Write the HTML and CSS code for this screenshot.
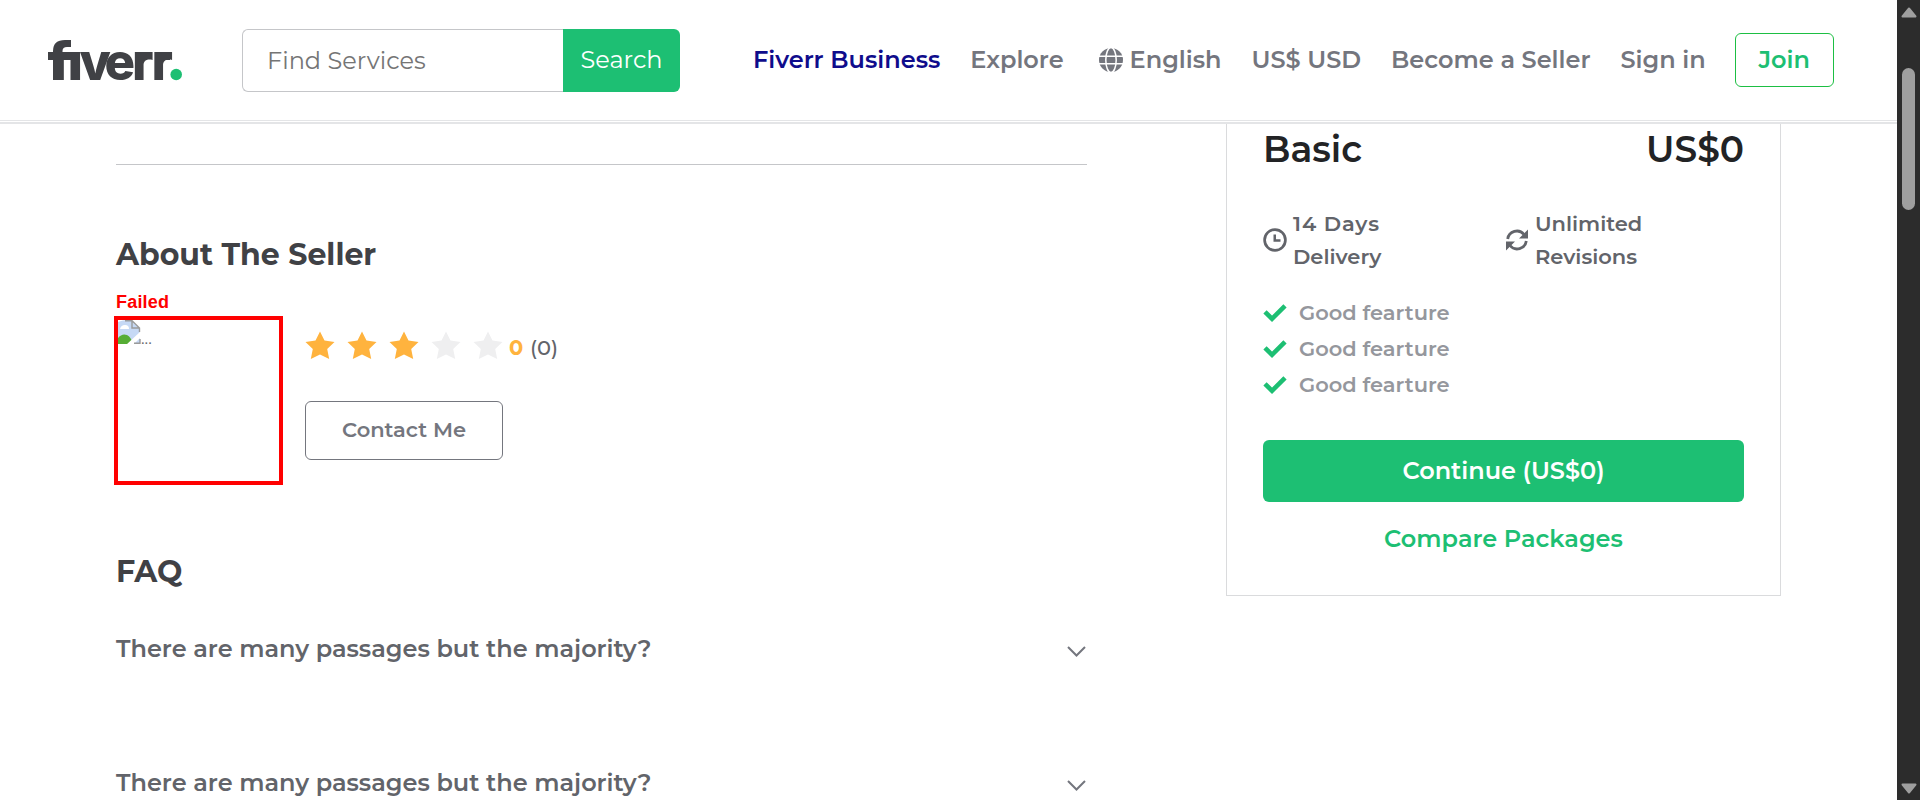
FILE: index.html
```
<!DOCTYPE html>
<html lang="en">
<head>
<meta charset="utf-8">
<title>Fiverr</title>
<link rel="stylesheet" href="styles.css">
</head>
<body>
<div class="page">
  <header class="header">
    <div class="header-inner">
      <svg class="logo" width="136" height="46" viewBox="0 0 136 46" role="img" aria-label="fiverr">
        <text class="wordmark" y="43" x="2 20.500 31.500 56.500 84 103.500">fiverr</text>
        <rect x="14" y="0" width="20" height="15" fill="#fff"/>
        <path d="M5 15V14Q5 3 17 3H23V10H19Q14.500 10 14.500 14V15H32V43H22.500V23H14.500V43H5V23H0V15Z" fill="#404145"/>
        <path d="M94 15H103V22H94ZM112 15H122V23H112Z" fill="#404145"/>
        <circle cx="128.200" cy="37.500" r="5.800" fill="#1dbf73"/>
      </svg>
      <form class="search">
        <span class="search-input">Find Services</span>
        <span class="search-btn">Search</span>
      </form>
      <nav class="nav">
        <a class="business">Fiverr Business</a>
        <a class="explore">Explore</a>
        <a class="lang"><svg width="24" height="24" viewBox="0 0 24 24"><circle cx="12" cy="12" r="12" fill="#74767e"/><g fill="none" stroke="#fff" stroke-width="1.500"><path d="M0 8.200H24M0 15.800H24"/><ellipse cx="12" cy="12" rx="5.200" ry="12.500"/></g></svg><span>English</span></a>
        <a>US$ USD</a>
        <a>Become a Seller</a>
        <a>Sign in</a>
        <a class="join">Join</a>
      </nav>
    </div>
  </header>
  <main class="main">
    <section class="details">
      <div class="rule"></div>
      <h2 class="title about">About The Seller</h2>
      <div class="failed">Failed</div>
      <div class="seller">
        <div class="avatar">
          <svg width="23" height="24" viewBox="0 0 23 24"><path d="M0 2Q4 0 12 0L22 9V24H0Z" fill="#c6d9f5"/><path d="M2 9Q3 5 7 5Q11 5 11 9Z" fill="#fff"/><path d="M0 18Q4 13 9 15Q13 17 15 24H0Z" fill="#56ad35"/><path d="M8 25L23 11V17L15 25Z" fill="#fff"/><path d="M7 .7H14L21.500 8V12M14 1V8H21.500M22 19V23.300H16" fill="none" stroke="#9a9a9a" stroke-width="1.400"/></svg><span>...</span>
        </div>
        <div class="info">
          <div class="rating">
            <svg width="204" height="30" viewBox="0 0 204 30">
              <defs><path id="star" d="M14 .5L18.500 9.500L28.500 11L21.200 18L23.200 28L14 23.500L4.800 28L6.800 18L-.5 11L9.500 9.500Z"/></defs>
              <g fill="#ffb33e"><use href="#star" x="1"/><use href="#star" x="43"/><use href="#star" x="85"/></g>
              <g fill="#efeff0"><use href="#star" x="127"/><use href="#star" x="169"/></g>
            </svg>
            <b class="score">0</b><span class="count">(0)</span>
          </div>
          <a class="contact">Contact Me</a>
        </div>
      </div>
      <h2 class="title faq">FAQ</h2>
      <div class="question"><span>There are many passages but the majority?</span><svg width="20" height="12" viewBox="0 0 20 12"><path d="M1 1L9.500 9.500L18 1"/></svg></div>
      <div class="question"><span>There are many passages but the majority?</span><svg width="20" height="12" viewBox="0 0 20 12"><path d="M1 1L9.500 9.500L18 1"/></svg></div>
    </section>
    <aside class="card">
      <div class="plan"><span>Basic</span><span>US$0</span></div>
      <div class="meta">
        <div class="meta-item">
          <svg width="24" height="24" viewBox="0 0 24 24"><circle cx="12" cy="12" r="10.400" fill="none" stroke="#62646a" stroke-width="2.700"/><path d="M10.500 6.500H13V11.300H17.500V13.700H10.500Z" fill="#62646a"/></svg>
          <div><span class="days">14 Days</span><br>Delivery</div>
        </div>
        <div class="meta-item">
          <svg width="24" height="24" viewBox="0 0 24 24"><g fill="none" stroke="#62646a" stroke-width="2.800"><path d="M2.700 11A9.200 9.200 0 0 1 19 6.500"/><path d="M21.300 13A9.200 9.200 0 0 1 5 17.500"/></g><path d="M23 1.500V10.600H14ZM1 22.500V13.400H10Z" fill="#62646a"/></svg>
          <div>Unlimited<br>Revisions</div>
        </div>
      </div>
      <ul class="features">
        <li><svg width="24" height="20" viewBox="0 0 24 20"><path d="M2 8.800L9 15.800L22 2.800"/></svg>Good fearture</li>
        <li><svg width="24" height="20" viewBox="0 0 24 20"><path d="M2 8.800L9 15.800L22 2.800"/></svg>Good fearture</li>
        <li><svg width="24" height="20" viewBox="0 0 24 20"><path d="M2 8.800L9 15.800L22 2.800"/></svg>Good fearture</li>
      </ul>
      <a class="continue">Continue (US$0)</a>
      <a class="compare">Compare Packages</a>
    </aside>
  </main>
</div>
<div class="scrollbar">
  <svg width="16" height="11" viewBox="0 0 16 11"><path d="M8 1.500L14.500 9.500H1.500Z"/></svg>
  <div class="thumb"></div>
  <svg class="down" width="16" height="11" viewBox="0 0 16 11"><path d="M8 9.500L14.500 1.500H1.500Z"/></svg>
</div>
</body>
</html>
```
FILE: styles.css
```
* { box-sizing: border-box; }
body {
  margin: 0;
  width: 1920px;
  height: 800px;
  overflow: hidden;
  display: flex;
  background: #fff;
  font-family: Montserrat, Inter, sans-serif;
  color: #62646a;
}
.page { width: 1897px; height: 800px; overflow: hidden; }
svg { display: block; flex: none; }

.header { height: 124px; border-bottom: 2px solid #e4e5e7; }
.header-inner {
  height: 121px;
  border-bottom: 1px solid #e4e5e7;
  padding-left: 48px;
  display: flex;
  align-items: center;
}
.logo { margin-right: 58px; overflow: visible; }
.wordmark { font: 800 51px Inter, sans-serif; fill: #404145; }
.search { display: flex; width: 438px; height: 63px; margin-right: 73px; }
.search-input {
  width: 321px;
  border: 1px solid #c5c6c9;
  border-right: 0;
  border-radius: 6px 0 0 6px;
  padding-left: 24px;
  font-size: 24px;
  line-height: 61px;
  color: #757575;
}
.search-btn {
  width: 117px;
  border-radius: 0 6px 6px 0;
  background: #1dbf73;
  color: #fff;
  font-size: 24px;
  line-height: 61px;
  text-align: center;
}
.nav {
  display: flex;
  align-items: center;
  gap: 30px;
  font-size: 24px;
  font-weight: 600;
  line-height: 30px;
  color: #74767e;
  white-space: nowrap;
}
.nav > a:not(.join) { padding-bottom: 1px; }
.explore { margin-right: 5px; }
.lang { display: flex; align-items: center; gap: 7px; }
.business { color: #0f0c8c; }
.join {
  width: 99px;
  height: 54px;
  margin-left: -1px;
  border: 1px solid #1dbf43;
  border-radius: 6px;
  color: #1dbf73;
  line-height: 51px;
  text-align: center;
}

.main { display: flex; align-items: flex-start; padding-left: 116px; height: 676px; overflow: hidden; }
.details { width: 971px; margin-right: 139px; padding-top: 40px; }
.rule { height: 1px; background: #c5c6c9; }
.title { margin: 0; font-size: 30px; font-weight: 700; line-height: 30px; color: #404145; }
.about { margin-top: 75px; }
.failed {
  margin-top: 23px;
  font: bold 18px/18px "Liberation Sans", Arial, sans-serif;
  letter-spacing: .2px;
  color: #f00;
}
.seller { display: flex; gap: 22px; margin: 5px 0 0 -2px; }
.avatar {
  width: 169px;
  height: 169px;
  border: 4px solid #f00;
  display: flex;
  align-items: flex-start;
}
.avatar span { font-size: 17px; line-height: 36px; }
.info { padding-top: 15px; }
.rating { display: flex; align-items: center; height: 30px; font-size: 21px; line-height: 34px; }
.score { width: 21px; padding-top: 3px; color: #ffb33e; font-weight: 700; }
.count { padding-top: 3px; font-weight: 500; }
.contact {
  display: block;
  width: 198px;
  height: 59px;
  margin-top: 40px;
  border: 1px solid #74767e;
  border-radius: 6px;
  color: #74767e;
  font-size: 21px;
  font-weight: 600;
  line-height: 56px;
  text-align: center;
}
.faq { margin-top: 72px; }
.question {
  display: flex;
  justify-content: space-between;
  margin-top: 47px;
  font-size: 24px;
  font-weight: 600;
  line-height: 30px;
}
.question + .question { margin-top: 104px; }
.question svg { margin-top: 12px; fill: none; stroke: #74767e; stroke-width: 2; }

.card {
  width: 555px;
  height: 472px;
  border: 1px solid #dadbdd;
  border-top: 0;
  padding: 7px 36px 0;
}
.plan { display: flex; justify-content: space-between; font-size: 36px; font-weight: 600; line-height: 36px; color: #222325; }
.meta {
  display: grid;
  grid-template-columns: 242px 1fr;
  margin-top: 40px;
  font-size: 21px;
  font-weight: 600;
  line-height: 33px;
}
.meta-item { display: flex; align-items: center; gap: 6px; }
.days { letter-spacing: .9px; }
.features { list-style: none; margin: 21px 0 0; padding: 0; }
.features li {
  display: flex;
  align-items: center;
  gap: 12px;
  height: 36px;
  font-size: 21px;
  font-weight: 600;
  color: #95979d;
}
.features svg { margin-top: 1px; }
.features path { fill: none; stroke: #1dbf73; stroke-width: 4.6; }
.continue {
  display: block;
  height: 62px;
  margin-top: 38px;
  border-radius: 6px;
  background: #1dbf73;
  color: #fff;
  font-size: 24px;
  font-weight: 600;
  line-height: 61px;
  text-align: center;
}
.compare {
  display: block;
  margin-top: 22px;
  color: #1dbf73;
  font-size: 24px;
  font-weight: 600;
  line-height: 30px;
  text-align: center;
}

.scrollbar {
  width: 23px;
  height: 800px;
  padding: 7px 0 6px;
  background: #2c2c2c;
  display: flex;
  flex-direction: column;
  align-items: center;
}
.scrollbar path { fill: #9f9f9f; stroke: #9f9f9f; stroke-width: 2; stroke-linejoin: round; }
.thumb { width: 13px; height: 142px; margin-top: 50px; border-radius: 7px; background: #9f9f9f; }
.down { margin-top: auto; }
```
